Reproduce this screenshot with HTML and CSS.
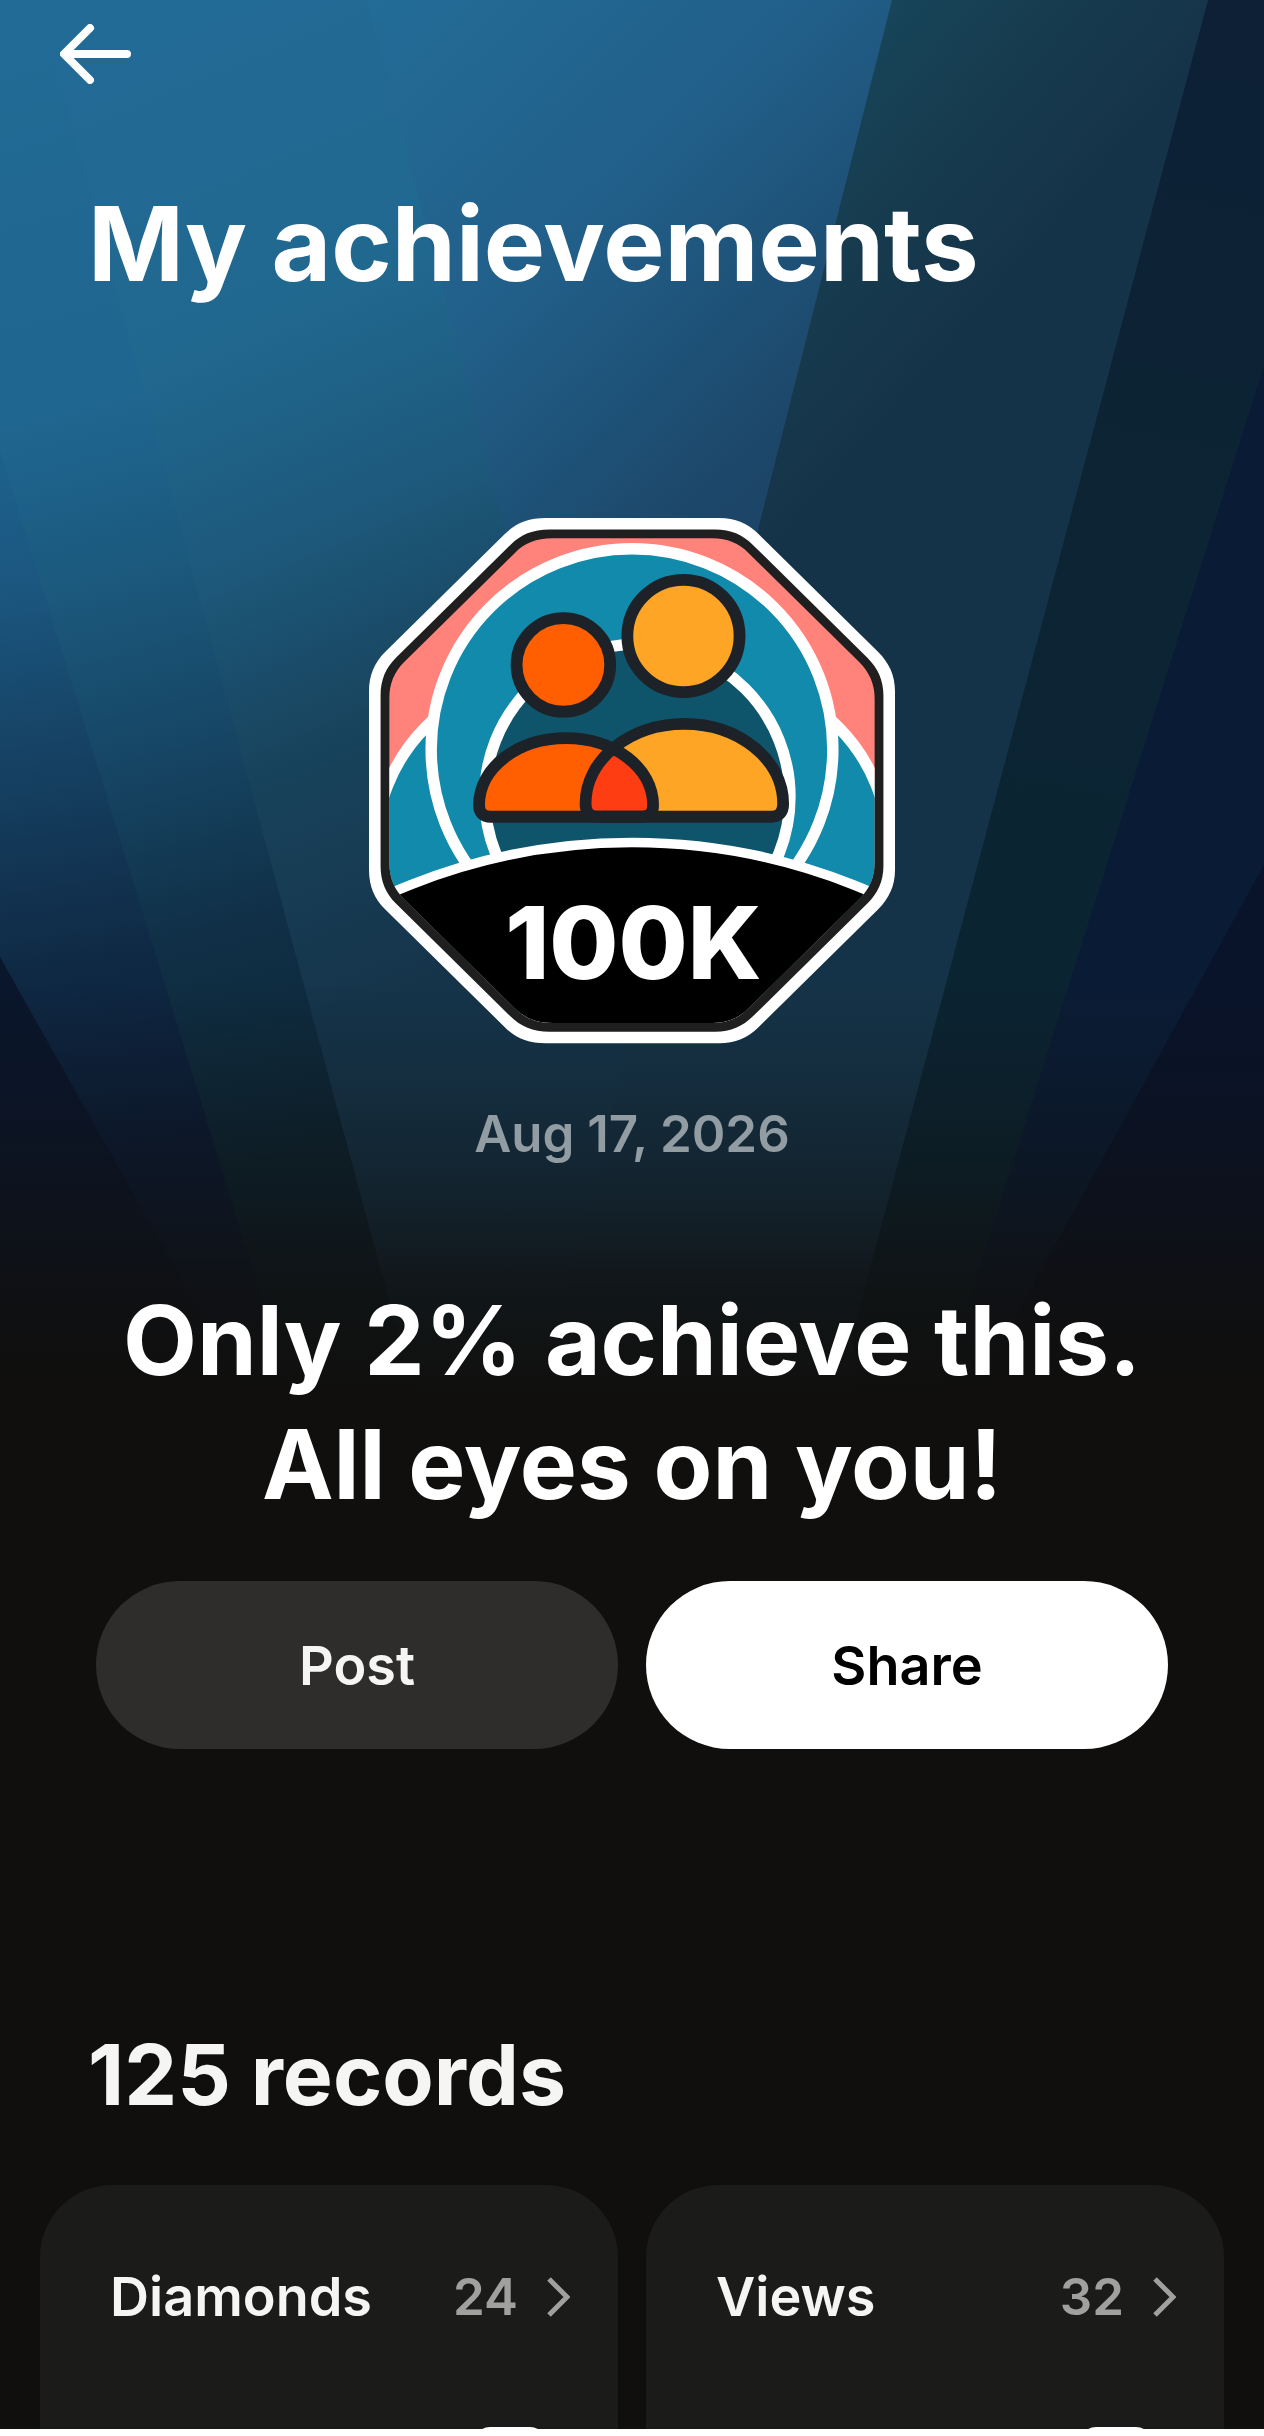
FILE: index.html
```html
<!DOCTYPE html>
<html lang="en">
<head>
  <meta charset="UTF-8">
  <meta name="viewport" content="width=device-width, initial-scale=1">
  <title>My achievements</title>
  <link rel="stylesheet" href="styles.css">
</head>
<body>
  <div class="page">
    <!-- Light beams behind the hero -->
    <svg class="beams" viewBox="0 0 1264 1400" preserveAspectRatio="none" aria-hidden="true">
      <defs>
        <linearGradient id="beam1" gradientUnits="userSpaceOnUse" x1="0" y1="400" x2="120" y2="1150">
          <stop offset="0" stop-color="#1e6691"/>
          <stop offset="0.25" stop-color="#1b567f"/>
          <stop offset="0.5" stop-color="#153f60"/>
          <stop offset="0.75" stop-color="#0f2944"/>
          <stop offset="1" stop-color="#0b1b35"/>
        </linearGradient>
        <linearGradient id="beam2" gradientUnits="userSpaceOnUse" x1="0" y1="0" x2="300" y2="1150">
          <stop offset="0" stop-color="#216b96"/>
          <stop offset="0.35" stop-color="#1f6690"/>
          <stop offset="0.5" stop-color="#1b587c"/>
          <stop offset="0.65" stop-color="#164564"/>
          <stop offset="0.8" stop-color="#103047"/>
          <stop offset="1" stop-color="#0c2433"/>
        </linearGradient>
        <linearGradient id="beam3" gradientUnits="userSpaceOnUse" x1="100" y1="0" x2="500" y2="950">
          <stop offset="0" stop-color="#226b97"/>
          <stop offset="0.35" stop-color="#21688f"/>
          <stop offset="0.55" stop-color="#1d597c"/>
          <stop offset="0.75" stop-color="#18435c"/>
          <stop offset="1" stop-color="#15344a"/>
        </linearGradient>
        <linearGradient id="beam4" gradientUnits="userSpaceOnUse" x1="380" y1="0" x2="800" y2="440">
          <stop offset="0" stop-color="#236c98"/>
          <stop offset="0.5" stop-color="#215f89"/>
          <stop offset="1" stop-color="#1c4567"/>
        </linearGradient>
        <linearGradient id="beam5" gradientUnits="userSpaceOnUse" x1="850" y1="0" x2="1080" y2="200">
          <stop offset="0" stop-color="#17475c"/>
          <stop offset="0.5" stop-color="#173c4f"/>
          <stop offset="1" stop-color="#153348"/>
        </linearGradient>
        <linearGradient id="beam6" gradientUnits="userSpaceOnUse" x1="1200" y1="0" x2="1000" y2="1000">
          <stop offset="0" stop-color="#0d2036"/>
          <stop offset="0.5" stop-color="#0c2434"/>
          <stop offset="1" stop-color="#0b2432"/>
        </linearGradient>
        <linearGradient id="fade" x1="0" y1="0" x2="0" y2="1">
          <stop offset="0.7" stop-color="#100f0d" stop-opacity="0"/>
          <stop offset="0.78" stop-color="#100f0d" stop-opacity="0.2"/>
          <stop offset="0.86" stop-color="#100f0d" stop-opacity="0.5"/>
          <stop offset="0.92" stop-color="#100f0d" stop-opacity="0.8"/>
          <stop offset="1" stop-color="#100f0d"/>
        </linearGradient>
      </defs>
      <rect width="1264" height="1400" fill="#0a162c"/>
      <path fill="url(#beam1)" d="M0 0H80L340 1400H250L0 957Z"/>
      <path fill="url(#beam2)" d="M0 0H80L420 1400H293L0 450Z"/>
      <path fill="#09132a" d="M1264 860V1400H970Z"/>
      <path fill="#0a1c35" d="M1264 300V865L970 1400H800Z"/>
      <path fill="url(#beam6)" d="M1150 0H1264V365L938 1400H800Z"/>
      <path fill="url(#beam3)" d="M38 0H500L760 520L860 1400H416Z"/>
      <path fill="url(#beam4)" d="M367 0H920L740 600H524Z"/>
      <path fill="url(#beam5)" d="M892 0H1208L835 1400H540L680 838Z"/>
      <rect width="1264" height="1400" fill="url(#fade)"/>
    </svg>

    <!-- Header -->
    <header class="header">
      <button class="back" type="button" aria-label="Back">
        <svg viewBox="0 0 72 60" aria-hidden="true">
          <path d="M30 4L4 30L30 56M5 30H67"/>
        </svg>
      </button>
      <h1 class="title">My achievements</h1>
    </header>

    <!-- Latest achievement -->
    <section class="hero">
      <svg class="badge" viewBox="50 50 1472 1472" role="img" aria-label="100K followers badge">
        <defs>
          <path id="octagon" d="M545 50H1030C1075 50 1110 65 1140 95L1475 425C1505 455 1522 490 1522 535V1035C1522 1080 1505 1115 1475 1145L1140 1475C1110 1505 1075 1520 1030 1520H545C495 1520 460 1505 430 1475L95 1145C65 1115 50 1080 50 1035V535C50 490 65 455 95 425L430 95C460 65 495 50 545 50Z"/>
          <path id="bodySmall" d="M358 853C358 750 465 666 601 666C737 666 845 750 845 853Q845 886 815 886H391Q358 886 358 853Z"/>
          <path id="bodyLarge" d="M656 850C656 726 780 626 932 626C1085 626 1209 726 1209 850Q1209 886 1175 886H690Q656 886 656 850Z"/>
          <clipPath id="inside">
            <use href="#octagon" transform="translate(786 785) scale(0.9226) translate(-786 -785)"/>
          </clipPath>
          <clipPath id="overlap">
            <use href="#bodySmall"/>
          </clipPath>
        </defs>
        <use href="#octagon" fill="#fff"/>
        <use href="#octagon" fill="#1f1f1f" transform="translate(786 785) scale(0.956) translate(-786 -785)"/>
        <g clip-path="url(#inside)">
          <rect x="50" y="50" width="1472" height="1472" fill="#ff837a"/>
          <g stroke="#fff" stroke-width="32">
            <circle cx="551" cy="976" r="483" fill="#118aab"/>
            <circle cx="1021" cy="976" r="483" fill="#118aab"/>
            <circle cx="786" cy="698" r="562" fill="#118aab"/>
            <circle cx="801" cy="830" r="427" fill="#0e556c"/>
            <circle cx="786" cy="2640" r="1682" fill="#000" stroke-width="27"/>
          </g>
        </g>
        <g stroke="#1c2227" stroke-width="33">
          <circle cx="594" cy="461" r="131" fill="#ff5f00"/>
          <circle cx="930" cy="380" r="157" fill="#ffa526"/>
        </g>
        <use href="#bodySmall" fill="#ff5f00"/>
        <use href="#bodyLarge" fill="#ffa526"/>
        <use href="#bodyLarge" fill="#ff3d12" clip-path="url(#overlap)"/>
        <g fill="none" stroke="#1c2227" stroke-width="33">
          <use href="#bodySmall"/>
          <use href="#bodyLarge"/>
        </g>
        <text class="badge-text" x="790" y="1340">100K</text>
      </svg>
      <time class="date" datetime="2026-08-17">Aug 17, 2026</time>
      <h2 class="headline">Only 2% achieve this.<br>All eyes on you!</h2>
      <div class="actions">
        <button class="btn btn-post" type="button">Post</button>
        <button class="btn btn-share" type="button">Share</button>
      </div>
    </section>

    <!-- Records -->
    <section class="records">
      <h2 class="records-title">125 records</h2>
      <div class="cards">
        <div class="card">
          <a class="card-head" href="#">
            <span class="card-name">Diamonds</span>
            <span class="card-count">24</span>
            <svg class="chevron" viewBox="0 0 24 40" aria-hidden="true"><path d="M3 2L21 20L3 38"/></svg>
          </a>
          <span class="card-art"></span>
        </div>
        <div class="card">
          <a class="card-head" href="#">
            <span class="card-name">Views</span>
            <span class="card-count">32</span>
            <svg class="chevron" viewBox="0 0 24 40" aria-hidden="true"><path d="M3 2L21 20L3 38"/></svg>
          </a>
          <span class="card-art"></span>
        </div>
      </div>
    </section>
  </div>
</body>
</html>
```
FILE: styles.css
```css
/* Global Reset */
* {
  margin: 0;
  padding: 0;
  box-sizing: border-box;
}
body {
  background: #fff;
  font-family: Inter, "Liberation Sans", sans-serif;
  color: #fff;
}
button {
  border: none;
  font-family: inherit;
  cursor: pointer;
}
.page {
  position: relative;
  height: calc(100vh - 7px);
  overflow: hidden;
  background: #100f0d;
}
/* Light beams */
.beams {
  position: absolute;
  top: 0;
  left: 0;
  width: 100%;
  height: 1400px;
}
/* Header */
.header {
  position: relative;
  padding: 24px 60px 0;
}
.back {
  display: block;
  width: 72px;
  height: 60px;
  background: none;
}
.back svg {
  display: block;
  width: 72px;
  height: 60px;
  fill: none;
  stroke: #fff;
  stroke-width: 8;
  stroke-linecap: round;
  stroke-linejoin: round;
}
.title {
  margin-top: 98px;
  padding-left: 28px;
  font-size: 103px;
  line-height: 124px;
  font-weight: 700;
}
/* Hero */
.hero {
  position: relative;
  display: flex;
  flex-direction: column;
  align-items: center;
  padding: 212px 96px 0;
}
.badge {
  display: block;
  width: 526px;
  height: 526px;
}
.badge-text {
  fill: #fff;
  font-size: 280px;
  font-weight: 800;
  text-anchor: middle;
}
.date {
  margin-top: 58px;
  font-size: 51px;
  line-height: 64px;
  font-weight: 600;
  color: #919da3;
}
.headline {
  margin-top: 112px;
  font-size: 96px;
  line-height: 124px;
  font-weight: 700;
  text-align: center;
  white-space: nowrap;
}
.actions {
  display: flex;
  gap: 28px;
  width: 100%;
  margin-top: 55px;
}
.btn {
  flex: 1;
  height: 168px;
  border-radius: 84px;
  font-size: 54px;
  font-weight: 600;
}
.btn-post {
  background: #2e2d2b;
  color: #f5f5f4;
}
.btn-share {
  background: #fff;
  color: #000;
}
/* Records */
.records {
  position: relative;
  padding: 276px 40px 0;
}
.records-title {
  padding-left: 48px;
  font-size: 84px;
  line-height: 100px;
  font-weight: 700;
  color: #f5f5f4;
}
.cards {
  display: flex;
  gap: 28px;
  margin-top: 60px;
}
.card {
  flex: 1;
  height: 576px;
  padding: 80px 48px 0 70px;
  border-radius: 72px;
  background: #1b1b19;
}
.card-head {
  display: flex;
  align-items: center;
  line-height: 64px;
  color: #f5f5f4;
  text-decoration: none;
}
.card-name {
  flex: 1;
  font-size: 54px;
  font-weight: 600;
}
.card-count {
  font-size: 51px;
  font-weight: 600;
  color: #a0a09e;
}
.chevron {
  width: 24px;
  height: 40px;
  margin-left: 28px;
  fill: none;
  stroke: #a0a09e;
  stroke-width: 5;
}
/* Top of the badge preview inside a card */
.card-art {
  display: block;
  width: 72px;
  height: 72px;
  margin: 98px 24px 0 auto;
  border-radius: 16px;
  background: #fff;
}
```
